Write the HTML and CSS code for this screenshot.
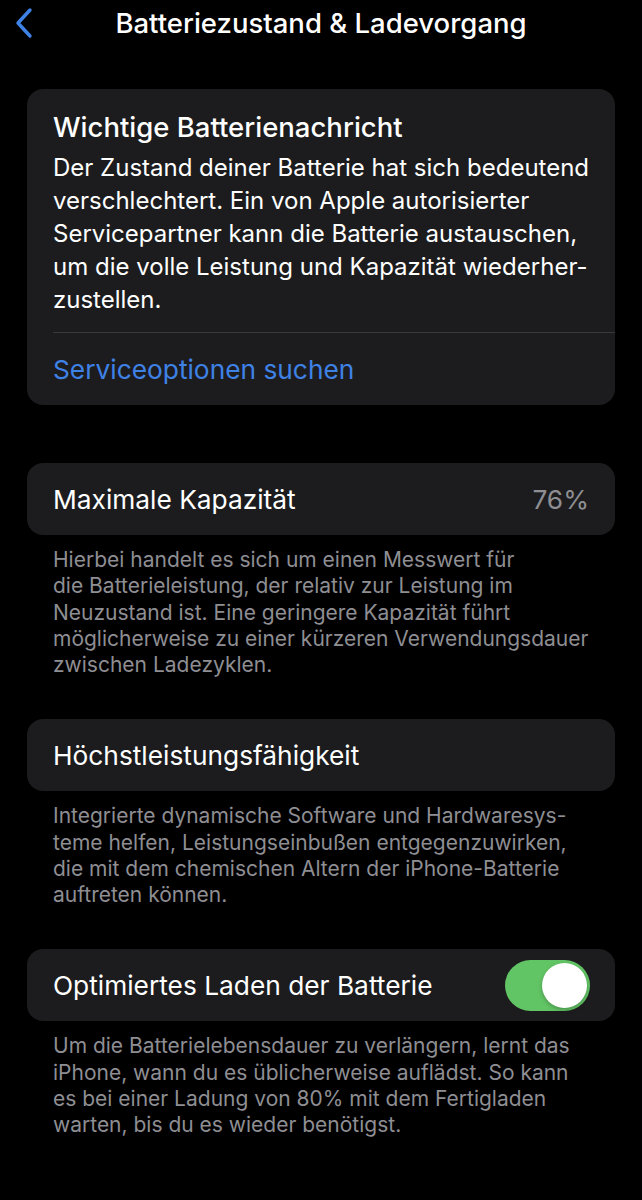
FILE: index.html
```html
<!DOCTYPE html>
<html lang="de">
<head>
<meta charset="utf-8">
<title>Batteriezustand &amp; Ladevorgang</title>
<link rel="stylesheet" href="styles.css">
</head>
<body>
<div class="screen">
  <header class="nav">
    <svg class="back" width="20" height="32" viewBox="0 0 20 32" aria-hidden="true">
      <path d="M16 3 L4 16 L16 29" fill="none" stroke="#3f82e6" stroke-width="3.4" stroke-linecap="round" stroke-linejoin="round"/>
    </svg>
    <h1 class="nav-title">Batteriezustand &amp; Ladevorgang</h1>
  </header>

  <section class="card message">
    <h2 class="msg-title">Wichtige Batterienachricht</h2>
    <p class="msg-body">Der Zustand deiner Batterie hat sich bedeutend<br>verschlechtert. Ein von Apple autorisierter<br>Servicepartner kann die Batterie austauschen,<br>um die volle Leistung und Kapazität wiederher-<br>zustellen.</p>
    <div class="sep"></div>
    <div class="link-row">Serviceoptionen suchen</div>
  </section>

  <section class="group first">
    <div class="card row">
      <span class="label">Maximale Kapazität</span>
      <span class="value">76%</span>
    </div>
    <p class="footer">Hierbei handelt es sich um einen Messwert für<br>die Batterieleistung, der relativ zur Leistung im<br>Neuzustand ist. Eine geringere Kapazität führt<br>möglicherweise zu einer kürzeren Verwendungsdauer<br>zwischen Ladezyklen.</p>
  </section>

  <section class="group">
    <div class="card row">
      <span class="label">Höchstleistungsfähigkeit</span>
    </div>
    <p class="footer">Integrierte dynamische Software und Hardwaresys-<br>teme helfen, Leistungseinbußen entgegenzuwirken,<br>die mit dem chemischen Altern der iPhone-Batterie<br>auftreten können.</p>
  </section>

  <section class="group">
    <div class="card row">
      <span class="label">Optimiertes Laden der Batterie</span>
      <span class="toggle"><span class="knob"></span></span>
    </div>
    <p class="footer">Um die Batterielebensdauer zu verlängern, lernt das<br>iPhone, wann du es üblicherweise auflädst. So kann<br>es bei einer Ladung von 80% mit dem Fertigladen<br>warten, bis du es wieder benötigst.</p>
  </section>
</div>
</body>
</html>
```

FILE: styles.css
```css
html, body {
  margin: 0;
  padding: 0;
  background: #000;
}
body {
  font-family: Inter, "Noto Sans", "Liberation Sans", sans-serif;
  color: #fff;
  -webkit-font-smoothing: antialiased;
}
.screen {
  width: 642px;
  min-height: 1200px;
  background: #000;
  padding: 0 27px;
  box-sizing: border-box;
}
.nav {
  position: relative;
  height: 46px;
  display: flex;
  align-items: center;
  justify-content: center;
}
.back {
  position: absolute;
  left: -13px;
  top: 7px;
}
.nav-title {
  margin: 0;
  font-size: 27.5px;
  font-weight: 500;
  line-height: 46px;
  white-space: nowrap;
}
.card {
  background: #1c1c1e;
  border-radius: 16px;
}
.message {
  margin-top: 43px;
  padding: 20px 0 0 26px;
}
.msg-title {
  margin: 0;
  font-size: 27.5px;
  font-weight: 500;
  line-height: 36px;
  white-space: nowrap;
}
.msg-body {
  margin: 6px 0 0;
  font-size: 24px;
  line-height: 33px;
  padding-right: 20px;
  white-space: nowrap;
}
.sep {
  height: 1px;
  background: #38383a;
  margin-top: 16px;
}
.link-row {
  height: 72px;
  display: flex;
  align-items: center;
  color: #3f82e6;
  font-size: 26.3px;
}
.group {
  margin-top: 41px;
}
.group.first {
  margin-top: 58px;
}
.row {
  height: 72px;
  padding: 0 26px;
  display: flex;
  align-items: center;
  justify-content: space-between;
}
.label {
  font-size: 26.3px;
  white-space: nowrap;
}
.value {
  font-size: 26.3px;
  color: #8e8e93;
}
.footer {
  margin: 0;
  padding: 12px 26px 0;
  font-size: 21px;
  line-height: 26.25px;
  color: #8e8e93;
  white-space: nowrap;
}
.toggle {
  width: 85px;
  height: 51px;
  border-radius: 26px;
  background: #62c565;
  display: flex;
  align-items: center;
  justify-content: flex-end;
  padding: 0 3px;
  box-sizing: border-box;
  margin-right: -1px;
}
.knob {
  width: 45px;
  height: 45px;
  border-radius: 50%;
  background: #fff;
  box-shadow: 0 2px 4px rgba(0,0,0,0.25);
}
```
